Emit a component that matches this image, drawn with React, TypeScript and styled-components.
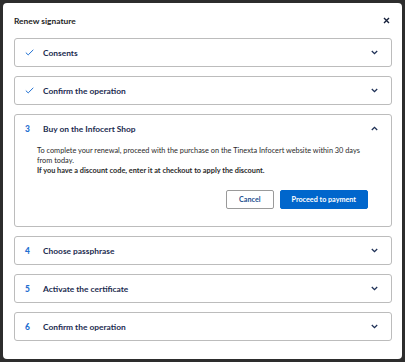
import styled, { createGlobalStyle } from 'styled-components'

const GlobalStyle = createGlobalStyle`
  html, body {
    margin: 0;
    padding: 0;
    background: #2d2d2d;
  }
  body {
    font-family: Lato, "Liberation Sans", Arial, sans-serif;
    -webkit-font-smoothing: antialiased;
  }
`

type Step = {
  key: string
  title: string
  done?: boolean
  open?: boolean
}

const steps: Step[] = [
  { key: '1', title: 'Consents', done: true },
  { key: '2', title: 'Confirm the operation', done: true },
  { key: '3', title: 'Buy on the Infocert Shop', open: true },
  { key: '4', title: 'Choose passphrase' },
  { key: '5', title: 'Activate the certificate' },
  { key: '6', title: 'Confirm the operation' },
]

const CheckIcon = () => (
  <svg width="9" height="7" viewBox="0 0 9 7" fill="none">
    <path d="M0.8 3.6L3.2 5.9L8.3 0.8" stroke="#1f6fd1" strokeWidth="1" />
  </svg>
)

const Chevron = ({ up }: { up?: boolean }) => (
  <svg width="7" height="5" viewBox="0 0 7 5" fill="none">
    <path
      d={up ? 'M0.8 4L3.5 1.3L6.2 4' : 'M0.8 1L3.5 3.7L6.2 1'}
      stroke="#1d2f55"
      strokeWidth="1.3"
    />
  </svg>
)

const CloseIcon = () => (
  <svg width="7" height="7" viewBox="0 0 7 7" fill="none">
    <path d="M1 1L6 6M6 1L1 6" stroke="#15203a" strokeWidth="1.4" />
  </svg>
)

export default function App() {
  return (
    <>
      <GlobalStyle />
      <Page>
        <Modal>
          <Header>
            <Title>Renew signature</Title>
            <CloseButton aria-label="Close">
              <CloseIcon />
            </CloseButton>
          </Header>
          <Steps>
            {steps.map((s) => (
              <Card key={s.key}>
                <CardHead>
                  <Marker>{s.done ? <CheckIcon /> : s.key}</Marker>
                  <StepTitle>{s.title}</StepTitle>
                  <Chevron up={s.open} />
                </CardHead>
                {s.open && (
                  <CardBody>
                    <Text>
                      To complete your renewal, proceed with the purchase on the Tinexta
                      Infocert website within 30 days from today.
                    </Text>
                    <Text bold>
                      If you have a discount code, enter it at checkout to apply the discount.
                    </Text>
                    <Actions>
                      <Button>Cancel</Button>
                      <Button primary>Proceed to payment</Button>
                    </Actions>
                  </CardBody>
                )}
              </Card>
            ))}
          </Steps>
        </Modal>
      </Page>
    </>
  )
}

const Page = styled.div`
  padding: 3px;
  height: 362px;
  box-sizing: border-box;
`

const Modal = styled.div`
  width: 399px;
  height: 356px;
  box-sizing: border-box;
  background: #fff;
  border-radius: 4px;
  padding: 0 10px 0 11px;
`

const Header = styled.div`
  display: flex;
  align-items: center;
  justify-content: space-between;
  height: 35px;
  padding-right: 2px;
`

const Title = styled.div`
  font-size: 8.4px;
  font-weight: 700;
  color: #1e1e1e;
`

const CloseButton = styled.button`
  display: flex;
  align-items: center;
  justify-content: center;
  border: 0;
  background: none;
  padding: 0;
  cursor: pointer;
`

const Steps = styled.div`
  display: flex;
  flex-direction: column;
  gap: 9px;
`

const Card = styled.div`
  border: 1px solid #bcbcbc;
  border-radius: 3px;
`

const CardHead = styled.div`
  display: flex;
  align-items: center;
  height: 27px;
  padding: 0 13px 0 10px;
`

const Marker = styled.span`
  width: 18px;
  display: flex;
  align-items: center;
  font-size: 8.4px;
  font-weight: 900;
  color: #1f6fd1;
`

const StepTitle = styled.span`
  flex: 1;
  font-size: 8.4px;
  font-weight: 700;
  color: #1b2b4f;
`

const CardBody = styled.div`
  padding: 4px 20px 17px 22px;
`

const Text = styled.p<{ bold?: boolean }>`
  margin: 0;
  font-size: 7.35px;
  line-height: 10px;
  color: #2a2a2a;
  font-weight: ${({ bold }) => (bold ? 700 : 400)};
`

const Actions = styled.div`
  display: flex;
  justify-content: flex-end;
  gap: 6px;
  margin-top: 14px;
  padding-right: 3px;
`

const Button = styled.button<{ primary?: boolean }>`
  height: 19px;
  padding: 0 ${({ primary }) => (primary ? 11 : 12)}px;
  border-radius: 2px;
  font-family: inherit;
  font-size: 7.2px;
  font-weight: 700;
  cursor: pointer;
  border: 1px solid ${({ primary }) => (primary ? '#0066cc' : '#9a9a9a')};
  background: ${({ primary }) => (primary ? '#0066cc' : '#fff')};
  color: ${({ primary }) => (primary ? '#fff' : '#1d4f8f')};
`
